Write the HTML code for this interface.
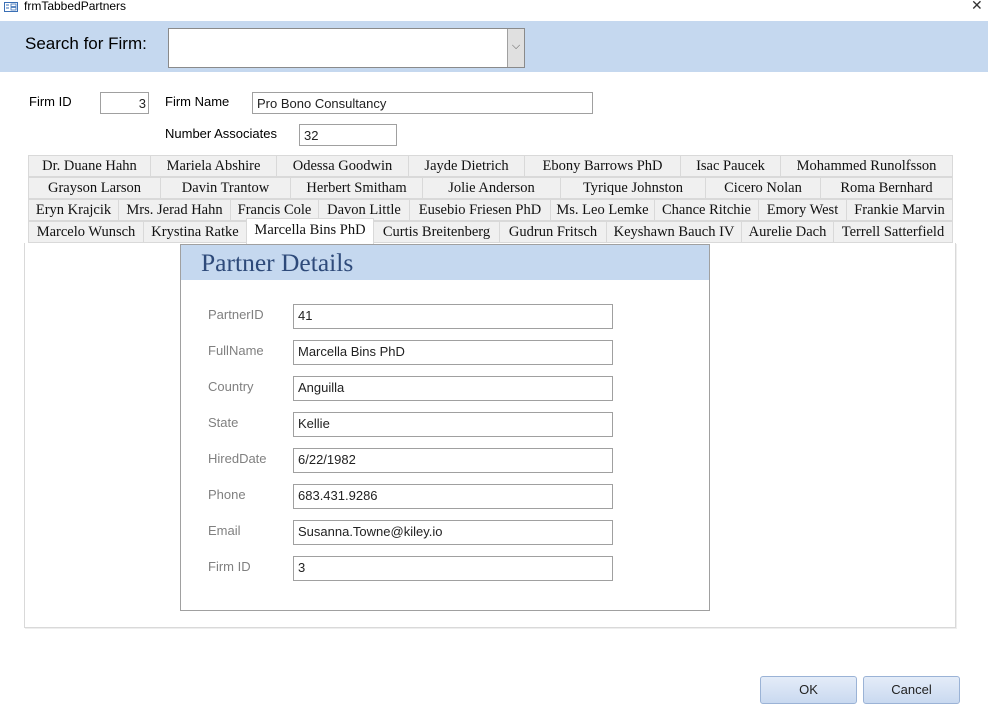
<!DOCTYPE html>
<html><head><meta charset="utf-8"><style>
*{box-sizing:border-box;margin:0;padding:0}
body{width:988px;height:704px;background:#fff;position:relative;overflow:hidden;font-family:"Liberation Sans",sans-serif;font-size:13px;color:#000}
.a{position:absolute}
.inp{position:absolute;border:1px solid #a0a0a0;background:#fff;font-size:13px;padding:3px 4px;line-height:16px;color:#222}
.tab{position:absolute;height:22px;background:#f0f0f0;border:1px solid #d9d9d9;font-family:"Liberation Serif",serif;font-size:14.5px;text-align:center;line-height:20px;color:#111;white-space:nowrap;overflow:hidden}
.lbl{position:absolute;left:208px;color:#808080;font-size:13px}
.btn{position:absolute;top:676px;height:28px;border:1px solid #9bb3d6;border-radius:3px;background:linear-gradient(#e4ecf8,#c9d9f0);text-align:center;line-height:26px;font-size:13px;color:#222}
</style></head><body>
<svg class="a" style="left:4px;top:2px" width="14" height="10" viewBox="0 0 14 10"><rect x="0.5" y="0.5" width="13" height="9" fill="#fff" stroke="#3a6fb5"/><line x1="2" y1="3" x2="5" y2="3" stroke="#3a6fb5"/><line x1="2" y1="6" x2="5" y2="6" stroke="#3a6fb5"/><rect x="7" y="2" width="5" height="2.5" fill="none" stroke="#3a6fb5" stroke-width=".8"/><rect x="7" y="5.5" width="5" height="2.5" fill="none" stroke="#3a6fb5" stroke-width=".8"/></svg>
<div class="a" style="left:24px;top:0;font-size:12px;line-height:13px">frmTabbedPartners</div>
<div class="a" style="left:971px;top:-3px;font-size:14px;font-weight:300;color:#333">✕</div>
<div class="a" style="left:0;top:21px;width:988px;height:51px;background:#c5d8ef"></div>
<div class="a" style="left:25px;top:34px;font-size:17px">Search for Firm:</div>
<div class="a" style="left:168px;top:28px;width:357px;height:40px;background:#fff;border:1px solid #8a8a8a"></div>
<div class="a" style="left:507px;top:29px;width:17px;height:38px;background:#e0e0e0;border-left:1px solid #a0a0a0;text-align:center;line-height:34px;font-size:11px;color:#555">⌵</div>
<div class="a" style="left:29px;top:94px">Firm ID</div>
<div class="inp" style="left:100px;top:92px;width:49px;height:22px;text-align:right;padding-right:2px">3</div>
<div class="a" style="left:165px;top:94px">Firm Name</div>
<div class="inp" style="left:252px;top:92px;width:341px;height:22px">Pro Bono Consultancy</div>
<div class="a" style="left:165px;top:126px">Number Associates</div>
<div class="inp" style="left:299px;top:124px;width:98px;height:22px">32</div>
<div class="a" style="left:24px;top:243px;width:932px;height:385px;border:1px solid #d9d9d9;border-top:none;background:#fff;box-shadow:1px 1px 0 #eee"></div>
<div class="tab" style="left:28px;top:155px;width:123px">Dr. Duane Hahn</div>
<div class="tab" style="left:150px;top:155px;width:127px">Mariela Abshire</div>
<div class="tab" style="left:276px;top:155px;width:133px">Odessa Goodwin</div>
<div class="tab" style="left:408px;top:155px;width:117px">Jayde Dietrich</div>
<div class="tab" style="left:524px;top:155px;width:157px">Ebony Barrows PhD</div>
<div class="tab" style="left:680px;top:155px;width:101px">Isac Paucek</div>
<div class="tab" style="left:780px;top:155px;width:173px">Mohammed Runolfsson</div>
<div class="tab" style="left:28px;top:177px;width:133px">Grayson Larson</div>
<div class="tab" style="left:160px;top:177px;width:131px">Davin Trantow</div>
<div class="tab" style="left:290px;top:177px;width:133px">Herbert Smitham</div>
<div class="tab" style="left:422px;top:177px;width:139px">Jolie Anderson</div>
<div class="tab" style="left:560px;top:177px;width:146px">Tyrique Johnston</div>
<div class="tab" style="left:705px;top:177px;width:116px">Cicero Nolan</div>
<div class="tab" style="left:820px;top:177px;width:133px">Roma Bernhard</div>
<div class="tab" style="left:28px;top:199px;width:91px">Eryn Krajcik</div>
<div class="tab" style="left:118px;top:199px;width:113px">Mrs. Jerad Hahn</div>
<div class="tab" style="left:230px;top:199px;width:89px">Francis Cole</div>
<div class="tab" style="left:318px;top:199px;width:92px">Davon Little</div>
<div class="tab" style="left:409px;top:199px;width:142px">Eusebio Friesen PhD</div>
<div class="tab" style="left:550px;top:199px;width:105px">Ms. Leo Lemke</div>
<div class="tab" style="left:654px;top:199px;width:105px">Chance Ritchie</div>
<div class="tab" style="left:758px;top:199px;width:89px">Emory West</div>
<div class="tab" style="left:846px;top:199px;width:107px">Frankie Marvin</div>
<div class="tab" style="left:28px;top:221px;width:116px">Marcelo Wunsch</div>
<div class="tab" style="left:143px;top:221px;width:104px">Krystina Ratke</div>
<div class="tab" style="left:246px;top:218px;width:128px;height:26px;background:#fff;border-bottom:none;line-height:22px">Marcella Bins PhD</div>
<div class="tab" style="left:373px;top:221px;width:127px">Curtis Breitenberg</div>
<div class="tab" style="left:499px;top:221px;width:108px">Gudrun Fritsch</div>
<div class="tab" style="left:606px;top:221px;width:136px">Keyshawn Bauch IV</div>
<div class="tab" style="left:741px;top:221px;width:93px">Aurelie Dach</div>
<div class="tab" style="left:833px;top:221px;width:120px">Terrell Satterfield</div>
<div class="a" style="left:180px;top:244px;width:530px;height:367px;border:1px solid #a0a0a0;background:#fff"></div>
<div class="a" style="left:181px;top:245px;width:528px;height:35px;background:#c5d8ef"></div>
<div class="a" style="left:201px;top:248px;font-family:'Liberation Serif',serif;font-size:25.5px;color:#2e4a7a">Partner Details</div>
<div class="lbl" style="top:307px">PartnerID</div><div class="inp" style="left:293px;top:304px;width:320px;height:25px">41</div>
<div class="lbl" style="top:343px">FullName</div><div class="inp" style="left:293px;top:340px;width:320px;height:25px">Marcella Bins PhD</div>
<div class="lbl" style="top:379px">Country</div><div class="inp" style="left:293px;top:376px;width:320px;height:25px">Anguilla</div>
<div class="lbl" style="top:415px">State</div><div class="inp" style="left:293px;top:412px;width:320px;height:25px">Kellie</div>
<div class="lbl" style="top:451px">HiredDate</div><div class="inp" style="left:293px;top:448px;width:320px;height:25px">6/22/1982</div>
<div class="lbl" style="top:487px">Phone</div><div class="inp" style="left:293px;top:484px;width:320px;height:25px">683.431.9286</div>
<div class="lbl" style="top:523px">Email</div><div class="inp" style="left:293px;top:520px;width:320px;height:25px">Susanna.Towne@kiley.io</div>
<div class="lbl" style="top:559px">Firm ID</div><div class="inp" style="left:293px;top:556px;width:320px;height:25px">3</div>
<div class="btn" style="left:760px;width:97px">OK</div>
<div class="btn" style="left:863px;width:97px">Cancel</div>
</body></html>
